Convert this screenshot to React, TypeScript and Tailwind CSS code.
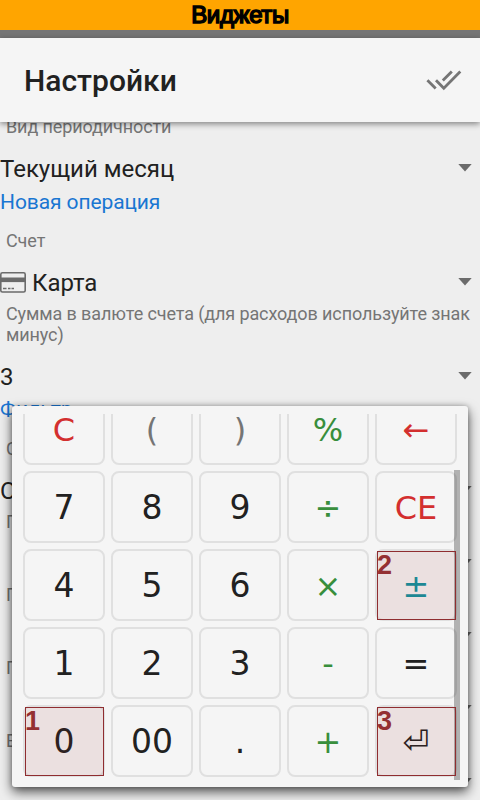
import { Fragment } from "react";

type Key = { label: string; tone: string; mark?: string };

const dark = "text-[#212121] text-[33px]";
const red = "text-[#d32f2f]";
const green = "text-[#388e3c]";
const gray = "text-[#757575]";

const keys: Key[] = [
  { label: "C", tone: red },
  { label: "(", tone: gray },
  { label: ")", tone: gray },
  { label: "%", tone: green },
  { label: "←", tone: red },
  { label: "7", tone: dark },
  { label: "8", tone: dark },
  { label: "9", tone: dark },
  { label: "÷", tone: green },
  { label: "CE", tone: red },
  { label: "4", tone: dark },
  { label: "5", tone: dark },
  { label: "6", tone: dark },
  { label: "×", tone: green },
  { label: "±", tone: "text-[#0f93a1]", mark: "2" },
  { label: "1", tone: dark },
  { label: "2", tone: dark },
  { label: "3", tone: dark },
  { label: "-", tone: green },
  { label: "=", tone: "text-[#212121]" },
  { label: "0", tone: dark, mark: "1" },
  { label: "00", tone: dark },
  { label: ".", tone: dark },
  { label: "+", tone: green },
  { label: "⏎", tone: "text-[#212121]", mark: "3" },
];

function Caret() {
  return (
    <svg className="mr-2 mb-0.5 h-2 w-[14px]" viewBox="0 0 14 8">
      <path d="M0.3 0h13.4L7 7.4z" fill="#6b6b6b" />
    </svg>
  );
}

function Label({ children, className }: { children: string; className: string }) {
  return (
    <div className={`px-1.5 text-[18px] leading-[21px] tracking-[-0.11px] text-[#757575] ${className}`}>{children}</div>
  );
}

function Section({ children, className }: { children: string; className: string }) {
  return (
    <div className={`text-[21px] leading-[25px] tracking-[-0.1px] text-[#1976d2] ${className}`}>{children}</div>
  );
}

function Spinner({ children, className, card }: { children?: string; className: string; card?: boolean }) {
  return (
    <div className={`flex h-7 items-center justify-between text-[24px] leading-7 text-[#212121] ${className}`}>
      <div className="flex items-center">
        {card && (
          <svg className="mr-1.5 mb-px h-[21px] w-[26px]" viewBox="0 0 26 21" fill="none">
            <rect x="0.8" y="0.8" width="24.4" height="19.2" rx="1.6" stroke="#6b6b6b" strokeWidth="1.6" />
            <path d="M0 5.5h26v4.6H0z" fill="#6b6b6b" />
            <path d="M3 16.5h3.5M8 16.5h2.5M11.5 16.5h2.5" stroke="#6b6b6b" strokeWidth="1.7" />
          </svg>
        )}
        <span>{children}</span>
      </div>
      <Caret />
    </div>
  );
}

export default function App() {
  return (
    <div className="relative flex h-[800px] w-[480px] flex-col overflow-hidden bg-[#eeeeee] font-[Roboto,sans-serif]">
      <div className="flex h-[30px] shrink-0 items-center justify-center bg-[#ffa500] font-['Liberation_Sans',sans-serif] text-[24px] leading-[30px] tracking-[-0.4px] text-black [-webkit-text-stroke:1.5px_black]">
        Виджеты
      </div>
      <div className="h-2 shrink-0 bg-[#757575]" />
      <header className="z-10 flex h-[84px] shrink-0 items-center justify-between bg-[#f5f5f5] pr-[18px] pl-6 shadow-[0_2px_6px_rgba(0,0,0,0.45)]">
        <h1 className="text-[30px] font-medium text-[#212121]">Настройки</h1>
        <svg className="mt-px h-6 w-9" viewBox="0 0 36 24" fill="none" stroke="#757575" strokeWidth="2.8">
          <path d="M1.4 11.2l8.3 8.3M10 11.2l7.8 8L34.3 2.4M16.8 11.6l9-9.2" />
        </svg>
      </header>
      <main className="flex flex-col">
        <Label className="-mt-1.5">Вид периодичности</Label>
        <Spinner className="mt-[18px]">Текущий месяц</Spinner>
        <Section className="mt-[7px]">Новая операция</Section>
        <Label className="mt-[15px]">Счет</Label>
        <Spinner className="mt-[18px]" card>Карта</Spinner>
        <Label className="mt-1.5">Сумма в валюте счета (для расходов используйте знак минус)</Label>
        <Spinner className="mt-[18px]">3</Spinner>
        <Section className="mt-1.5">Фильтр</Section>
        <Label className="mt-4">Счет</Label>
        <Spinner className="mt-[18px]">Основной</Spinner>
        {["Проект", "Получатель", "Приоритет", "Валюта"].map((name) => (
          <Fragment key={name}>
            <Label className="mt-1.5">{name}</Label>
            <Spinner className="mt-[18px]" />
          </Fragment>
        ))}
      </main>

      <section className="absolute top-[406px] left-3 z-20 h-[381px] w-[456px] rounded-[3px] bg-[#f5f5f5] pt-2 shadow-[0_5px_12px_rgba(0,0,0,0.65),0_0_5px_rgba(0,0,0,0.25)]">
        <div className="flex h-[366px] flex-col justify-end overflow-hidden pb-[3px] pl-[11px]">
          <div className="grid grid-cols-[repeat(5,82px)] auto-rows-[72px] gap-1.5 font-['DejaVu_Sans',sans-serif] text-[32px] leading-none">
            {keys.map((key) => (
              <button
                key={key.label}
                className={`relative flex items-center justify-center rounded-[8px] border-2 border-[#e0e0e0] pt-px leading-none ${key.tone}`}
              >
                {key.label}
                {key.mark && (
                  <span className="absolute top-0 left-0 z-10 h-[69px] w-[79px] border border-[#8f2d30] bg-[rgba(145,35,35,0.1)] text-left font-['Liberation_Sans',sans-serif] text-[27px] leading-[26px] font-bold text-[#943032] -indent-px">
                    {key.mark}
                  </span>
                )}
              </button>
            ))}
          </div>
        </div>
        <div className="absolute top-16 right-2 h-[310px] w-1.5 bg-black/28" />
      </section>
    </div>
  );
}
